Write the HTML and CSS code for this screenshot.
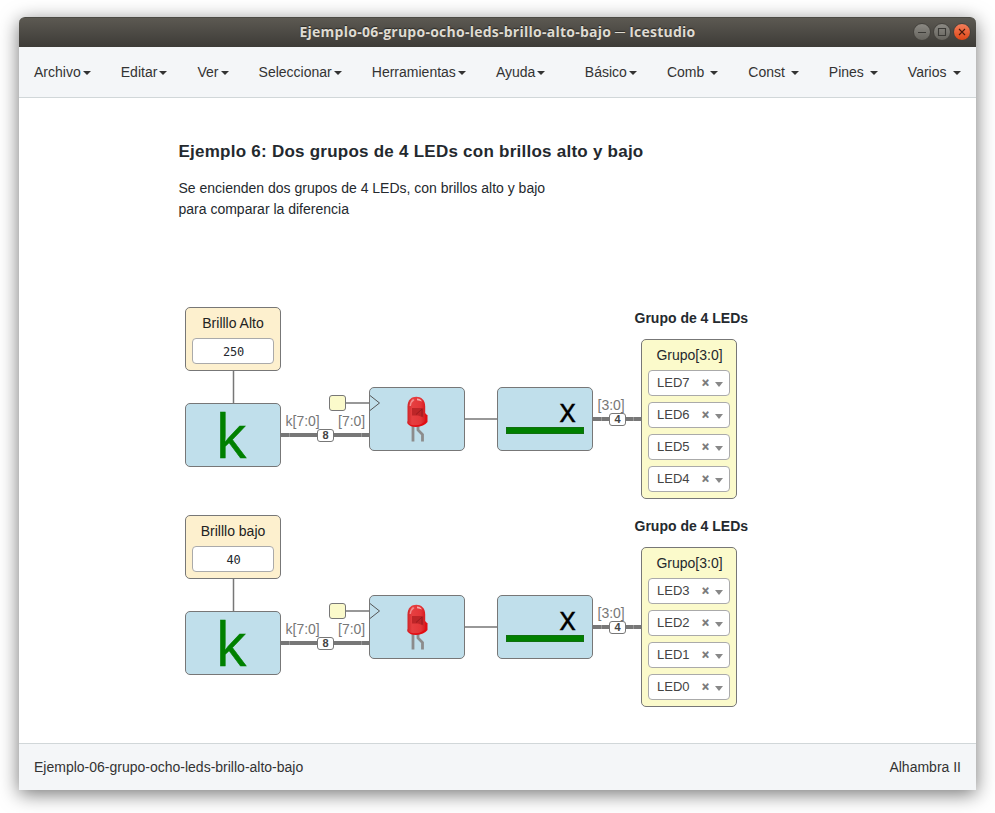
FILE: index.html
```html
<!DOCTYPE html>
<html lang="es">
<head>
<meta charset="utf-8">
<title>Ejemplo-06-grupo-ocho-leds-brillo-alto-bajo ─ Icestudio</title>
<link rel="stylesheet" href="styles.css">
</head>
<body>
<svg class="defs" width="0" height="0" aria-hidden="true">
  <defs>
    <linearGradient id="lens" x1="0" y1="0" x2="1" y2="0">
      <stop offset="0" stop-color="#cf2427"/><stop offset=".25" stop-color="#e63f41"/><stop offset=".75" stop-color="#e33538"/><stop offset="1" stop-color="#d81c20"/>
    </linearGradient>
    <symbol id="led" viewBox="0 0 22 48">
      <path d="M6 30V45.500M11 30V34L15.500 38.500V45.500" fill="none" stroke="#8c8c8c" stroke-width="2.800"/>
      <path d="M.5 25.500V27.500Q3 31 9 31Q17 30.500 20.500 26V19.500L18 17Z" fill="#e30c12"/>
      <path d="M.5 10.500C.5 4 4.500 .8 9.300 .8S18.200 4 18.200 10.500V25Q15 29 9 29.300Q3 29.300 .5 27Z" fill="url(#lens)"/>
      <path d="M5 12H16.500V21.500L11 19.500H5Z" fill="#bd2528"/>
      <path d="M9 18.500L15 13V20.500" fill="none" stroke="#9c191d" stroke-width="1"/>
      <path d="M2.500 10Q3 5 6 3L7.500 4Q4.500 6 4 10Z" fill="#f28b8c"/>
      <path d="M10 2.500Q13.500 2.500 15 5.500Q12.500 4.500 10 4.200Z" fill="#f7abab"/>
    </symbol>
    <symbol id="wires" viewBox="0 0 560 200">
      <g fill="none" stroke="#777">
        <path d="M48.500 64V96" stroke-width="1.500"/>
        <path d="M160 96H184M280 112H312" stroke-width="1.500"/>
        <path d="M96 128H184M408 112H456" stroke-width="4"/>
      </g>
      <path d="M104.500 126V130M176.500 126V130M416.500 110V114M448.500 110V114" stroke="#999" fill="none"/>
    </symbol>
  </defs>
</svg>
<div class="window">
  <header class="titlebar">
    <span class="title">Ejemplo-06-grupo-ocho-leds-brillo-alto-bajo ─ Icestudio</span>
    <div class="controls">
      <svg class="control" viewBox="0 0 16 16"><path d="M4 8.500H12"/></svg>
      <svg class="control" viewBox="0 0 16 16"><path d="M4.500 4.500H11.500V11.500H4.500Z"/></svg>
      <svg class="control close" viewBox="0 0 16 16"><path d="M5 5L11 11M11 5L5 11"/></svg>
    </div>
  </header>
  <nav class="menubar">
    <div class="menu"><a>Archivo<i class="caret"></i></a><a>Editar<i class="caret"></i></a><a>Ver<i class="caret"></i></a><a>Seleccionar<i class="caret"></i></a><a>Herramientas<i class="caret"></i></a><a>Ayuda<i class="caret"></i></a></div>
    <div class="menu"><a>Básico<i class="caret"></i></a><a>Comb <i class="caret"></i></a><a>Const <i class="caret"></i></a><a>Pines <i class="caret"></i></a><a>Varios <i class="caret"></i></a></div>
  </nav>
  <main class="canvas">
    <section class="info">
      <h1>Ejemplo 6: Dos grupos de 4 LEDs con brillos alto y bajo</h1>
      <p>Se encienden dos grupos de 4 LEDs, con brillos alto y bajo<br>para comparar la diferencia</p>
    </section>
    <section class="circuit high">
      <svg class="wires" width="560" height="200"><use href="#wires"/></svg>
      <div class="node constant"><span>Brilllo Alto</span><div class="value">250</div></div>
      <div class="node block k">k</div>
      <span class="port p-k">k[7:0]</span><span class="port p-in">[7:0]</span><span class="port p-out">[3:0]</span>
      <span class="bus b8">8</span><span class="bus b4">4</span>
      <i class="clock"></i>
      <div class="node block led"><svg class="clk" width="12" height="16" viewBox="0 0 12 16"><path d="M0 .5L9.500 8L0 15.500"/></svg><svg class="picture" width="22" height="48"><use href="#led"/></svg></div>
      <div class="node block x"><span>x</span><i class="bar"></i></div>
      <strong class="caption">Grupo de 4 LEDs</strong>
      <div class="node output"><span>Grupo[3:0]</span>
        <div class="pin">LED7<b>×</b><i class="arrow"></i></div><div class="pin">LED6<b>×</b><i class="arrow"></i></div><div class="pin">LED5<b>×</b><i class="arrow"></i></div><div class="pin">LED4<b>×</b><i class="arrow"></i></div>
      </div>
    </section>
    <section class="circuit low">
      <svg class="wires" width="560" height="200"><use href="#wires"/></svg>
      <div class="node constant"><span>Brilllo bajo</span><div class="value">40</div></div>
      <div class="node block k">k</div>
      <span class="port p-k">k[7:0]</span><span class="port p-in">[7:0]</span><span class="port p-out">[3:0]</span>
      <span class="bus b8">8</span><span class="bus b4">4</span>
      <i class="clock"></i>
      <div class="node block led"><svg class="clk" width="12" height="16" viewBox="0 0 12 16"><path d="M0 .5L9.500 8L0 15.500"/></svg><svg class="picture" width="22" height="48"><use href="#led"/></svg></div>
      <div class="node block x"><span>x</span><i class="bar"></i></div>
      <strong class="caption">Grupo de 4 LEDs</strong>
      <div class="node output"><span>Grupo[3:0]</span>
        <div class="pin">LED3<b>×</b><i class="arrow"></i></div><div class="pin">LED2<b>×</b><i class="arrow"></i></div><div class="pin">LED1<b>×</b><i class="arrow"></i></div><div class="pin">LED0<b>×</b><i class="arrow"></i></div>
      </div>
    </section>
  </main>
  <footer class="statusbar"><span>Ejemplo-06-grupo-ocho-leds-brillo-alto-bajo</span><span>Alhambra II</span></footer>
</div>
</body>
</html>
```
FILE: styles.css
```css
* { box-sizing: border-box; }
body { margin: 0; height: 813px; padding: 17px 19px 23px; overflow: hidden; background: #fff; font: 14px/20px "Liberation Sans", Arial, sans-serif; color: #333; }
.defs { display: block; }
.window { width: 957px; height: 773px; display: flex; flex-direction: column; background: #fff; border-radius: 6px 6px 0 0; box-shadow: 0 4px 19px rgba(0,0,0,.55); }
.titlebar { height: 30px; display: grid; grid-template-columns: 1fr auto 1fr; align-items: center; padding: 0 5px 1px; background: linear-gradient(#5c5952, #3d3b37); border-top: 1px solid #4b4a44; border-radius: 6px 6px 0 0; }
.title { grid-column: 2; font: bold 14px/20px "Open Sans", "Noto Sans", sans-serif; letter-spacing: .25px; color: #dfdbd2; text-shadow: 0 -1px 1px #2b2a27; white-space: nowrap; }
.controls { display: flex; gap: 2px; justify-self: end; }
.control { width: 18px; height: 18px; border: 1px solid #44423d; border-radius: 50%; background: linear-gradient(#8b8983, #66645e); fill: none; stroke: #3b3a36; stroke-width: 1.100; }
.close { background: linear-gradient(#f37e5b, #df4616); stroke: #47190b; }
.menubar { height: 51px; display: flex; justify-content: space-between; background: #f4f6f8; border-bottom: 1px solid #d1d7d9; }
.menu { display: flex; }
.menu a { padding: 15px; white-space: pre; }
.caret { display: inline-block; margin-left: 2.100px; border: 4px solid transparent; border-top-color: #333; border-bottom: 0; vertical-align: middle; }
.menu + .menu { margin-right: .5px; }
.canvas { flex: 1; position: relative; overflow: hidden; }
.info { padding: 43px 0 0 159.500px; color: #24292e; }
h1 { margin: 0 0 16px; font-size: 17px; line-height: 21px; letter-spacing: .245px; }
p { margin: 0; line-height: 21px; }
.circuit { position: absolute; left: 166px; width: 560px; height: 200px; }
.high { top: 209px; }
.low { top: 417px; }
.wires { position: absolute; left: 0; top: 0; }
.node { position: absolute; border: 1px solid #777; border-radius: 5px; color: #24292e; }
.block { width: 96px; height: 64px; background: #c0dfeb; }
.constant { left: 0; top: 0; width: 96px; height: 64px; padding: 5px 6px; background: #fdf0ce; text-align: center; }
.constant > span { display: block; color: #222; }
.value { height: 26px; margin-top: 5px; border: 1px solid #aaa; border-radius: 4px; background: #fff; font: 12px/26px "DejaVu Sans Mono", monospace; letter-spacing: -.2px; padding-left: 1px; }
.k { left: 0; top: 96px; padding-right: 4px; font: 60px/62px "Open Sans", sans-serif; color: #008000; text-align: center; -webkit-text-stroke: .5px #008000; }
.led { left: 184px; top: 80px; }
.clk { position: absolute; left: 0; top: 7px; fill: none; stroke: #555; }
.picture { position: absolute; left: 37px; top: 8px; }
.x { left: 312px; top: 80px; font: 32px/36px "Open Sans", sans-serif; color: #000; display: flex; flex-direction: column; padding: 4px 8px; }
.x span { align-self: flex-end; padding-right: 8px; -webkit-text-stroke: .3px #000; }
.bar { height: 7px; margin-top: -1px; background: #008000; border: 1px solid #107010; }
.port { position: absolute; color: #777; font-size: 14px; white-space: nowrap; }
.p-k { left: 100.500px; top: 104px; }
.p-in { left: 153px; top: 104px; }
.p-out { left: 412.500px; top: 88px; }
.bus { position: absolute; width: 17px; height: 13px; border: 1px solid #777; border-radius: 3px; background: #fff; font: bold 11px/11px "Liberation Sans", sans-serif; text-align: center; color: #444; }
.b8 { left: 132px; top: 122px; }
.b4 { left: 424px; top: 106px; }
.clock { position: absolute; left: 144px; top: 88px; width: 17px; height: 16px; border: 1px solid #777; border-radius: 3px; background: #fbfacb; }
.caption { position: absolute; left: 449.500px; top: 1px; color: #24292e; white-space: nowrap; }
.output { left: 456px; top: 32px; width: 96px; height: 160px; padding: 5px 6px; background: #fbfacb; display: flex; flex-direction: column; gap: 6px; }
.output > span { text-align: center; margin-bottom: -1px; padding-left: 1px; }
.pin { height: 26px; flex: none; display: flex; align-items: center; padding: 0 6px 0 8px; border: 1px solid #aaa; border-radius: 4px; background: #fff; font-size: 13px; color: #444; }
.pin b { margin-left: auto; font-size: 12px; color: #777; -webkit-text-stroke: .4px #777; }
.arrow { margin: 2px 0 0 6px; border: 4px solid transparent; border-top: 5px solid #888; border-bottom: 0; }
.statusbar { height: 47px; display: flex; justify-content: space-between; padding: 13px 15px; background: #f4f6f8; border-top: 1px solid #d1d7d9; }
```
